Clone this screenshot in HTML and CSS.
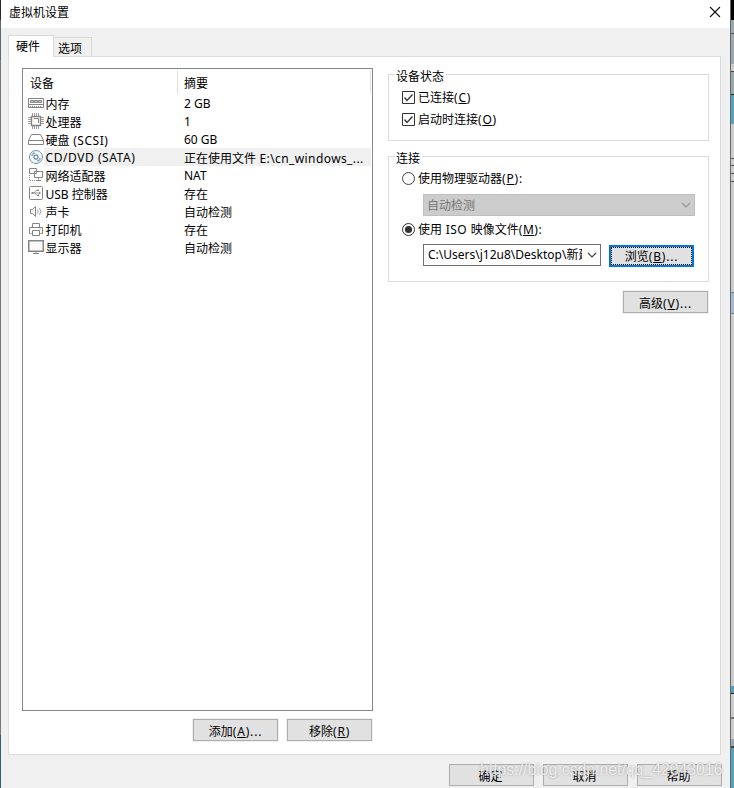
FILE: index.html
```html
<!DOCTYPE html>
<html lang="zh-CN">
<head>
<meta charset="utf-8">
<title>虚拟机设置</title>
<link rel="stylesheet" href="styles.css">
</head>
<body>
<div class="desktop">
<div class="edge-left"></div>
<main class="window">
  <header class="titlebar"><span>虚拟机设置</span>
    <svg class="close" width="12" height="12" viewBox="0 0 12 12"><path d="M1 1L11 11M11 1L1 11" stroke="#111" stroke-width="1.1"/></svg>
  </header>
  <nav class="tabs"><div class="tab active">硬件</div><div class="tab">选项</div></nav>
  <section class="page">
    <div class="left">
      <div class="list">
        <div class="head"><span class="c1">设备</span><span class="c2">摘要</span></div>
        <div class="row"><svg class="ic" viewBox="0 0 16 16"><path d="M.5 3.500h15v9H.5z" class="g"/><path d="M2.500 5.500h3v2h-3zM6.500 5.500h3v2h-3zM10.500 5.500h3v2h-3z" class="g f"/><path d="M1 9.500h14" class="g"/><path d="M2 11.500h12" class="g dash"/></svg><span class="name">内存</span><span class="val latin">2 GB</span></div>
        <div class="row"><svg class="ic" viewBox="0 0 16 16"><path d="M3.500 3.500h9v9h-9z" class="g heavy"/><path d="M6 5.500h4.500v4.500" class="g"/><path d="M4.500 0v3M6.500 0v3M8.500 0v3M10.500 0v3M4.500 13v3M6.500 13v3M8.500 13v3M10.500 13v3M0 4.500h3M0 6.500h3M0 8.500h3M0 10.500h3M13 4.500h3M13 6.500h3M13 8.500h3M13 10.500h3" class="g thin"/></svg><span class="name">处理器</span><span class="val latin">1</span></div>
        <div class="row"><svg class="ic" viewBox="0 0 16 16"><path d="M3.500 3.500h9l3 6v4H.5v-4zM.5 9.500h15" class="g"/></svg><span class="name">硬盘<span class="latin wide"> (SCSI)</span></span><span class="val latin">60 GB</span></div>
        <div class="row selected"><svg class="ic" viewBox="0 0 16 16"><circle cx="8" cy="8" r="6.500" fill="#f5fafd" stroke="#6d91ae"/><circle cx="8" cy="8" r="2" fill="#fff" stroke="#6d91ae" stroke-width="1.300"/><path d="M4 7Q4 4 7 4M9 12Q12 12 12 9" stroke="#91adc3" fill="none" stroke-width="1.500"/></svg><span class="name latin wide">CD/DVD (SATA)</span><span class="val">正在使用文件<span class="latin path"> E:\cn_windows_...</span></span></div>
        <div class="row"><svg class="ic" viewBox="0 0 16 16"><path d="M1.500 1.500h7v5h-7zM6.500 4.500h8v6h-8zM10.500 10.500v2M8 13.500h5" class="g w"/><path d="M1.500 8v5.500h6" class="g dash"/></svg><span class="name">网络适配器</span><span class="val latin">NAT</span></div>
        <div class="row"><svg class="ic" viewBox="0 0 16 16"><rect x="1.500" y="1.500" width="13" height="13" rx="1" class="g"/><path d="M4 8h8M6 8l2-2.500h2M7 8l2 2.500h2" class="g thin"/><path d="M3.500 7h2v2h-2zM9.500 4.500h1.500v1.500H9.500zM9.500 9.500h1.500v1.500H9.500zM11 6.500l2 1.500-2 1.500z" fill="#888"/></svg><span class="name"><span class="latin">USB </span>控制器</span><span class="val">存在</span></div>
        <div class="row"><svg class="ic" viewBox="0 0 16 16"><path d="M2.500 6.500h2l3-3v10l-3-3h-2z" class="g"/><path d="M9.500 6.500q1.500 2 0 4M11.500 5q2.500 3.500 0 7" class="g thin"/></svg><span class="name">声卡</span><span class="val">自动检测</span></div>
        <div class="row"><svg class="ic" viewBox="0 0 16 16"><path d="M4.500 6.500v-4h7v4M3.500 12.500h-2v-6h13v6h-2M4.500 9.500h7v5h-7zM11.500 8h1" class="g"/></svg><span class="name">打印机</span><span class="val">存在</span></div>
        <div class="row"><svg class="ic" viewBox="0 0 16 16"><path d="M.75 1.750h14.500v10.500H.75z" fill="#fafafa" stroke="#858585" stroke-width="1.500"/><path d="M5 14.500h6M8 12v2" class="g"/></svg><span class="name">显示器</span><span class="val">自动检测</span></div>
      </div>
      <div class="buttons"><button class="btn halo">添加<span class="latin key">(<u>A</u>)...</span></button><button class="btn halo">移除<span class="latin key">(<u>R</u>)</span></button></div>
    </div>
    <div class="right">
      <section class="group status"><h2>设备状态</h2>
        <label><svg width="13" height="13"><path d="M.5.5h12v12H.5z" fill="#fff" stroke="#333"/><path d="M2.500 6.500L5 9.500L10.500 3.500" fill="none" stroke="#333" stroke-width="1.300"/></svg><span>已连接<span class="latin key">(<u>C</u>)</span></span></label>
        <label><svg width="13" height="13"><path d="M.5.5h12v12H.5z" fill="#fff" stroke="#333"/><path d="M2.500 6.500L5 9.500L10.500 3.500" fill="none" stroke="#333" stroke-width="1.300"/></svg><span>启动时连接<span class="latin key">(<u>O</u>)</span></span></label>
      </section>
      <section class="group connect"><h2>连接</h2>
        <label><svg width="13" height="13"><circle cx="6.500" cy="6.500" r="6" fill="#fff" stroke="#444"/></svg><span>使用物理驱动器<span class="latin key">(<u>P</u>):</span></span></label>
        <div class="combo disabled"><span>自动检测</span><svg width="10" height="6"><path d="M1 1l4 4 4-4" fill="none" stroke="#999" stroke-width="1.200"/></svg></div>
        <label><svg width="13" height="13"><circle cx="6.500" cy="6.500" r="6" fill="#fff" stroke="#333"/><circle cx="6.500" cy="6.500" r="3.600" fill="#333"/></svg><span>使用<span class="latin iso"> ISO </span>映像文件<span class="latin iso">(<u>M</u>):</span></span></label>
        <div class="file"><div class="combo"><span class="filename"><span class="latin">C:\Users\j12u8\Desktop\</span>新建</span><svg width="10" height="6"><path d="M1 1l4 4 4-4" fill="none" stroke="#444" stroke-width="1.200"/></svg></div>
        <button class="btn focus">浏览<span class="latin key">(<u>B</u>)...</span></button></div>
      </section>
      <button class="btn halo advanced">高级<span class="latin key">(<u>V</u>)...</span></button>
    </div>
  </section>
  <footer><button class="btn">确定</button><button class="btn">取消</button><button class="btn">帮助</button><span class="watermark">https://blog.csdn.net/qq_42043016</span></footer>
</main>
<div class="edge-right"></div>
</div>
</body>
</html>
```
FILE: styles.css
```css
* { box-sizing: border-box; }
body { margin: 0; font: 12px/18px "Noto Sans", "Noto Sans CJK SC", sans-serif; color: #000; overflow: hidden; }
.desktop { display: flex; width: 734px; height: 788px; overflow: hidden; }
.edge-left { width: 1px; background: linear-gradient(#26282b 20px, #596a71 20px 60px, #777 60px 735px, #355f70 735px); }
.window { width: 729px; height: 788px; background: #f0f0f0; position: relative; }
.edge-right { width: 4px; border-left: 1px solid #666; background: linear-gradient(#000 20px, #98a8ae 20px 33px, #555 33px 34px, #98a8ae 34px 64px, #ccc 64px 71px, #444 71px 72px, #98a8ae 72px 94px, #222 94px 95px, #51a3bf 95px 124px, #ccc 124px 158px, #555 158px 159px, #ccc 159px 165px, #555 165px 166px, #ccc 166px 173px, #555 173px 174px, #ccc 174px 181px, #555 181px 182px, #ccc 182px 292px, #6889af 292px 293px, #a6b9d3 293px 313px, #6889af 313px 314px, #ccc 314px 686px, #51a3bf 686px 693px, #222 693px 694px, #ccc 694px 717px, #777 717px 719px, #ccc 719px 739px, #98a8ae 739px 746px, #444 746px 748px, #51a3bf 748px); }
.titlebar { height: 28px; background: #fff; display: flex; justify-content: space-between; padding: 4px 9px 0 8px; }
.close { margin-top: 2px; }
.tabs { display: flex; align-items: flex-end; height: 28px; padding-left: 7px; }
.tab { height: 19px; width: 38px; border: 1px solid #d9d9d9; border-bottom: 0; border-left: 0; padding-left: 4px; padding-top: 2px; }
.tab.active { width: 46px; height: 22px; border-left: 1px solid #d9d9d9; background: #fff; padding-left: 7px; padding-top: 2px; margin-bottom: -1px; z-index: 1; }
.page { margin-left: 7px; width: 713px; height: 699px; background: #fff; border: 1px solid #dcdcdc; display: flex; padding: 11px 11px 0 13px; gap: 15px; }
.left { width: 351px; }
.list { height: 643px; border: 1px solid #828790; }
.head { height: 26px; display: flex; margin-right: 1px; padding: 1px 0 1px; }
.head span { border-right: 1px solid #e2e2e2; padding: 5px 6px 0; }
.head .c1 { width: 155px; padding-left: 7px; }
.c2 { width: 193px; }
.row { height: 18px; display: flex; align-items: center; padding-left: 5px; white-space: nowrap; }
.ic { width: 16px; height: 16px; margin: -2px 0 0 0; flex: none; }
.g { fill: none; stroke: #858585; }
.f { fill: #ccc; }
.w { fill: #fff; }
.thin { stroke-width: .8; }
.heavy { stroke-width: 1.4; }
.dash { stroke-dasharray: 1 1; }
.name { width: 135px; padding-left: 1.5px; height: 18px; margin-top: -2px; line-height: 21px; }
.val { width: 192px; padding-left: 5px; height: 18px; margin-top: -2px; line-height: 21px; }
.name.latin, .val.latin { line-height: 19px; }
.selected .name, .selected .val { background: #f0f0f0; }
.latin { white-space: pre; }
.wide { letter-spacing: .55px; }
.path { letter-spacing: .4px; }
.iso { letter-spacing: .5px; }
.key { letter-spacing: .8px; }
.buttons { display: flex; justify-content: flex-end; gap: 7px; padding-top: 7px; }
.btn { appearance: none; font: inherit; color: inherit; width: 87px; height: 24px; border: 1px solid #adadad; background: #e1e1e1; padding: 3px 0 0; text-align: center; flex: none; line-height: 18px; }
.btn.halo { border: 1px solid #f0f0f0; box-shadow: inset 0 0 0 1px #adadad; }
.right { width: 321px; padding-top: 6px; display: flex; flex-direction: column; }
.group { border: 1px solid #dcdcdc; padding-left: 13px; }
.group h2 { display: table; font-size: 12px; font-weight: 400; line-height: 18px; margin: -7px 0 0 -7px; padding: 0 2px 0 1px; background: #fff; }
.status { height: 67px; }
label { display: flex; align-items: center; height: 22px; gap: 3px; white-space: nowrap; }
label > span { padding-top: 2px; }
.status h2 + label { margin-top: 0; }
.connect { height: 126px; margin-top: 15px; }
.connect h2 + label { margin-top: -1px; }
.connect label > span { padding-top: 1px; }
.combo { width: 178px; height: 22px; border: 1px solid #707070; display: flex; align-items: center; justify-content: space-between; padding: 0 3px 0 4px; background: #fff; white-space: nowrap; }
.combo.disabled { width: 272px; margin: 5px 0 2px 21px; border-color: #bfbfbf; background: #ccc; color: #777; }
.combo.disabled span { margin-left: -1px; padding-top: 1px; }
.filename { width: 154px; overflow: hidden; }
.file { display: flex; gap: 8px; margin: 4px 0 0 21px; }
.btn.focus { width: 85px; height: 22px; margin-top: 1px; border: 2px solid #0078d7; padding: 2px 0 0; line-height: 16px; outline: 1px dotted #000; outline-offset: -3px; }
.advanced { align-self: flex-end; margin: 8px 0 0; }
footer { display: flex; padding: 9px 8px 0; justify-content: flex-end; gap: 9px; }
footer .btn { width: 85px; height: 22px; padding-right: 2px; }
.watermark { position: absolute; left: 479px; top: 760px; font: 15.8px/20px "Liberation Sans", sans-serif; color: rgba(255,255,255,.75); text-shadow: 0 0 2px #999; white-space: nowrap; }
```
